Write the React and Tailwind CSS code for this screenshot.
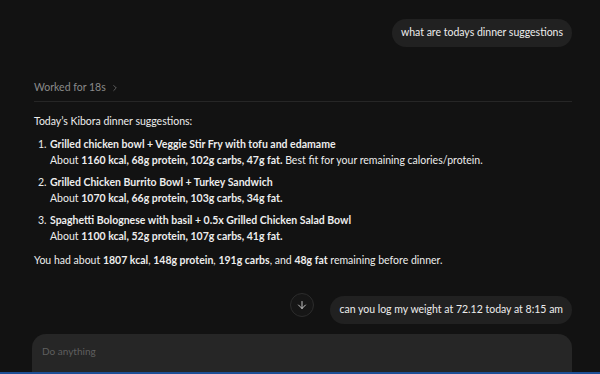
import { ArrowDown, ChevronRight } from 'lucide-react';

const items = [
  {
    title: 'Grilled chicken bowl + Veggie Stir Fry with tofu and edamame',
    stats: '1160 kcal, 68g protein, 102g carbs, 47g fat.',
    note: ' Best fit for your remaining calories/protein.',
  },
  {
    title: 'Grilled Chicken Burrito Bowl + Turkey Sandwich',
    stats: '1070 kcal, 66g protein, 103g carbs, 34g fat.',
    note: '',
  },
  {
    title: 'Spaghetti Bolognese with basil + 0.5x Grilled Chicken Salad Bowl',
    stats: '1100 kcal, 52g protein, 107g carbs, 41g fat.',
    note: '',
  },
];

export default function App() {
  return (
    <div
      className="relative flex h-[374px] w-[600px] flex-col overflow-hidden bg-[#121212] text-[10.5px] text-[#ededed]"
      style={{ fontFamily: 'Lato, "Open Sans", sans-serif' }}
    >
      <div className="flex flex-col pl-[34px] pr-[28px] pt-[19px]">
        {/* first user message */}
        <div className="flex h-[28px] items-center self-end rounded-[14px] bg-[#212121] px-[9px] text-[#ededed]">
          what are todays dinner suggestions
        </div>

        {/* worked for */}
        <div className="mt-[33px] flex items-center gap-[4px] text-[#8a8a8a]">
          <span>Worked for 18s</span>
          <ChevronRight size={10} strokeWidth={1.5} />
        </div>
        <div className="mt-[5px] h-px w-full bg-[#262626]" />

        {/* answer */}
        <p className="mt-[11px] leading-[16px]">Today’s Kibora dinner suggestions:</p>
        <ol className="mt-[7px] flex flex-col gap-[6px]">
          {items.map((it, i) => (
            <li key={i} className="flex leading-[16px]">
              <span className="w-[16px] shrink-0 pl-[4px]">{i + 1}.</span>
              <div>
                <div className="font-bold">{it.title}</div>
                <div>
                  About <span className="font-bold">{it.stats}</span>
                  {it.note}
                </div>
              </div>
            </li>
          ))}
        </ol>
        <p className="mt-[8px] leading-[16px]">
          You had about <span className="font-bold">1807 kcal</span>,{' '}
          <span className="font-bold">148g protein</span>,{' '}
          <span className="font-bold">191g carbs</span>, and{' '}
          <span className="font-bold">48g fat</span> remaining before dinner.
        </p>

        {/* second user message */}
        <div className="mt-[28px] flex h-[28px] items-center self-end rounded-[14px] bg-[#212121] px-[9px] text-[#ededed]">
          can you log my weight at 72.12 today at 8:15 am
        </div>
      </div>

      {/* floating scroll-to-bottom button */}
      <button className="absolute left-[290px] top-[293px] flex h-[24px] w-[24px] items-center justify-center rounded-full border border-[#2c2c2c] bg-[#161616] text-[#dcdcdc]">
        <ArrowDown size={12} strokeWidth={1.75} />
      </button>

      {/* composer */}
      <div className="ml-[32px] mr-[28px] mt-[10px] flex-1 rounded-t-[14px] bg-[#262626] px-[10px] pt-[10px] text-[10px] text-[#5f5f5f]">
        Do anything
      </div>
      <div className="h-[2px] bg-[#1d4f96]" />
    </div>
  );
}
